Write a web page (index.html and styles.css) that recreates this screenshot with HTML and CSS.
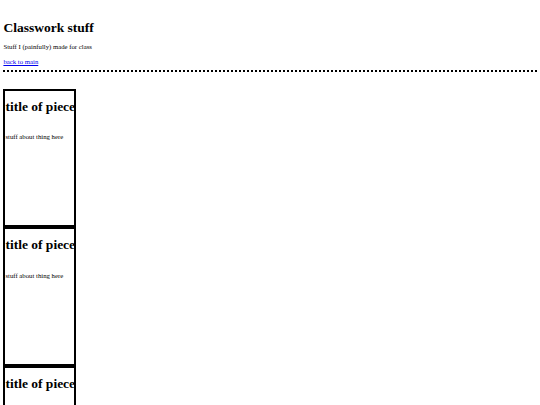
FILE: index.html
```html
<!DOCTYPE html>
<html lang="en">
<head>
    <meta charset="UTF-8">
    <meta name="viewport" content="width=device-width, initial-scale=1.0">
    <title>Classwork stuff</title>
    <link rel="stylesheet" href="styles.css">
</head>
<body>
    <header class="top">
        <h1>Classwork stuff</h1>
        <p class="sub">Stuff I (painfully) made for class</p>
        <a class="back" href="#">back to main</a>
    </header>
    <main class="pieces">
        <div class="piece">
            <h2>title of piece</h2>
            <p>stuff about thing here</p>
        </div>
        <div class="piece">
            <h2>title of piece</h2>
            <p>stuff about thing here</p>
        </div>
        <div class="piece">
            <h2>title of piece</h2>
            <p>stuff about thing here</p>
        </div>
    </main>
</body>
</html>
```

FILE: styles.css
```css
html { overflow: hidden; }
body { margin: 0; padding: 0 3.4px; font-family: "Liberation Serif", "Times New Roman", serif; font-size: 6.75px; color: #000; background: #fff; }
.top { padding-top: 20px; padding-bottom: 5px; border-bottom: 2px dotted #000; }
.top h1 { font-size: 13.5px; margin: 0 0 7px; }
.top .sub { margin: 0 0 8px; }
.top .back { color: #0000ee; display: block; }
.pieces { margin-top: 16.5px; }
.piece { width: 69px; height: 134.5px; border: 2px solid #000; }
.piece h2 { font-size: 13.5px; margin: 8px 0 18.5px; white-space: nowrap; }
.piece p { margin: 0; }
```
